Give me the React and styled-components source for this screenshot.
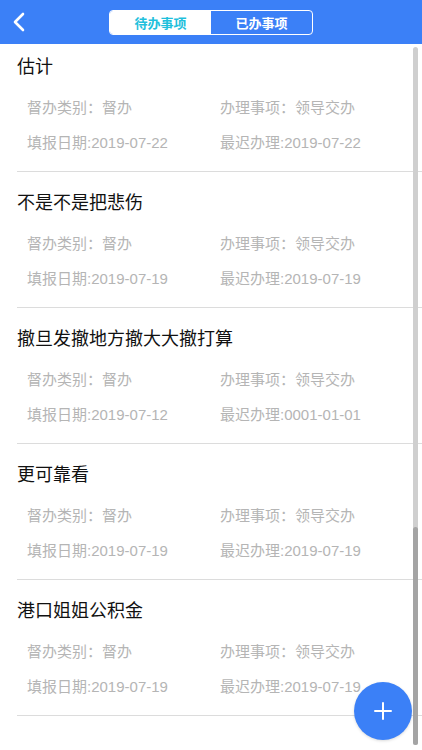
import React, { useState } from "react";
import styled, { createGlobalStyle } from "styled-components";

const GlobalStyle = createGlobalStyle`
  html, body {
    margin: 0;
    padding: 0;
    background: #ffffff;
    overflow: hidden;
  }
  body {
    font-family: "Liberation Sans", "Noto Sans CJK SC", sans-serif;
  }
`;

const todos = [
  { title: "估计", type: "督办", matter: "领导交办", filled: "2019-07-22", deadline: "2019-07-22" },
  { title: "不是不是把悲伤", type: "督办", matter: "领导交办", filled: "2019-07-19", deadline: "2019-07-19" },
  { title: "撤旦发撤地方撤大大撤打算", type: "督办", matter: "领导交办", filled: "2019-07-12", deadline: "0001-01-01" },
  { title: "更可靠看", type: "督办", matter: "领导交办", filled: "2019-07-19", deadline: "2019-07-19" },
  { title: "港口姐姐公积金", type: "督办", matter: "领导交办", filled: "2019-07-19", deadline: "2019-07-19" },
];

const App = () => {
  const [tab, setTab] = useState(0);

  return (
    <StPage>
      <GlobalStyle />
      <StHeader>
        <StBack type="button">
          <svg width="14" height="20" viewBox="0 0 14 20">
            <path d="M11 2 L3 10 L11 18" fill="none" stroke="#fff" strokeWidth="2.6" strokeLinecap="round" strokeLinejoin="round" />
          </svg>
        </StBack>
        <StSegment>
          <StSegmentItem active={tab === 0} onClick={() => setTab(0)}>待办事项</StSegmentItem>
          <StSegmentItem active={tab === 1} onClick={() => setTab(1)}>已办事项</StSegmentItem>
        </StSegment>
      </StHeader>

      <StScroll>
        <StList>
          {todos.map((item, i) => (
            <StItem key={i}>
              <StTitle>{item.title}</StTitle>
              <StRow>
                <StCell>督办类别：{item.type}</StCell>
                <StCell>办理事项：{item.matter}</StCell>
              </StRow>
              <StRow>
                <StCell>填报日期:{item.filled}</StCell>
                <StCell>最迟办理:{item.deadline}</StCell>
              </StRow>
            </StItem>
          ))}
        </StList>
      </StScroll>

      <StScrollTrack>
        <StScrollThumb />
      </StScrollTrack>

      <StFab type="button">
        <svg width="20" height="20" viewBox="0 0 20 20">
          <path d="M10 2 V18 M2 10 H18" stroke="#fff" strokeWidth="2" strokeLinecap="round" />
        </svg>
      </StFab>
    </StPage>
  );
};

export default App;

const StPage = styled.div`
  position: relative;
  width: 422px;
  height: 750px;
  overflow: hidden;
  background: #fff;
  display: flex;
  flex-direction: column;
`;

const StHeader = styled.header`
  position: relative;
  flex: none;
  height: 44px;
  background-color: #3b80f7;
  display: flex;
  align-items: center;
  justify-content: center;
`;

const StBack = styled.button`
  position: absolute;
  left: 12px;
  top: 12px;
  border: none;
  background: none;
  padding: 0;
  width: 16px;
  height: 20px;
  display: flex;
  cursor: pointer;
`;

const StSegment = styled.div`
  display: flex;
  width: 204px;
  height: 25px;
  margin-top: 1px;
  border: 1px solid #ffffff;
  border-radius: 4px;
  box-sizing: border-box;
  overflow: hidden;
`;

const StSegmentItem = styled.div`
  flex: 1;
  display: flex;
  align-items: center;
  justify-content: center;
  font-size: 13px;
  font-weight: bold;
  color: ${(p) => (p.active ? "#1fc0dc" : "#ffffff")};
  background-color: ${(p) => (p.active ? "#ffffff" : "transparent")};
  cursor: pointer;
`;

const StScroll = styled.div`
  flex: 1;
  overflow: hidden;
`;

/* list is scrolled a few pixels down, as in the screenshot */
const StList = styled.div`
  display: flex;
  flex-direction: column;
  margin-top: -8px;
`;

const StItem = styled.div`
  height: 136px;
  box-sizing: border-box;
  margin-left: 17px;
  padding-top: 19px;
  border-bottom: 1px solid #dcdcdc;
`;

const StTitle = styled.div`
  font-size: 18px;
  line-height: 24px;
  color: #111;
`;

const StRow = styled.div`
  display: flex;
  padding-left: 10px;
  margin-top: 19px;
  font-size: 15px;
  line-height: 20px;
  color: #b5b5b5;

  & + & {
    margin-top: 15px;
  }
`;

const StCell = styled.div`
  width: 193px;
  white-space: nowrap;
`;

const StScrollTrack = styled.div`
  position: absolute;
  left: 413px;
  top: 47px;
  width: 5px;
  height: 698px;
  border-radius: 3px;
  background: #cfcfcf;
  display: flex;
  flex-direction: column;
  justify-content: flex-end;
`;

const StScrollThumb = styled.div`
  height: 218px;
  border-radius: 3px;
  background: #a4a4a4;
`;

const StFab = styled.button`
  position: absolute;
  left: 354px;
  top: 682px;
  width: 58px;
  height: 58px;
  border: none;
  border-radius: 50%;
  background-color: #3b80f7;
  box-shadow: 0 1px 3px rgba(0, 0, 0, 0.15);
  display: flex;
  align-items: center;
  justify-content: center;
  padding: 0;
  cursor: pointer;
`;
